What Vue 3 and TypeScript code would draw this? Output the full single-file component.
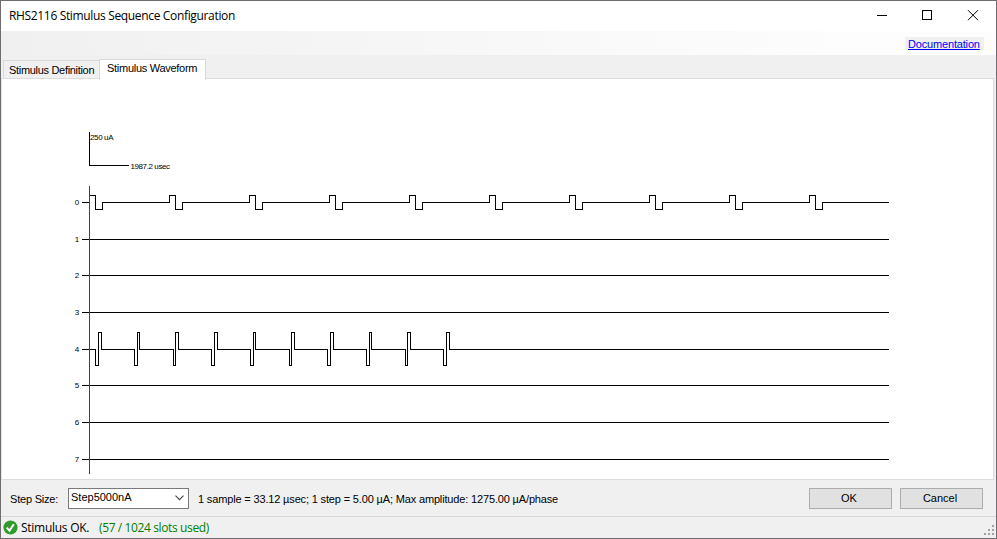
<script setup lang="ts">
import { ref } from 'vue'

interface Channel {
  id: number
  y: number
  path: string
}

const ORIGIN = 89.5
const END = 889

const baselines = [202, 239, 275, 312, 349, 385, 422, 459]

/** Left, middle and right edges of each cathodic-first pulse on channel 4. */
const shortPulses: [number, number, number][] = [
  [95, 98, 101], [134, 137, 139], [173, 175, 178], [211, 214, 217], [250, 253, 255],
  [289, 291, 294], [327, 330, 333], [366, 369, 371], [405, 407, 410], [443, 446, 449],
]

function pulsePath(y: number, edges: [number, number, number][], first: number, second: number): string {
  const base = y + 0.5
  const steps = edges.map(
    ([a, b, c]) => `H${a + 0.5}V${first + 0.5}H${b + 0.5}V${second + 0.5}H${c + 0.5}V${base}`,
  )
  return `M82 ${base}${steps.join('')}H${END}`
}

const longPulses = Array.from({ length: 10 }, (_, i): [number, number, number] => {
  const x = 89 + i * 80
  return [x, x + 6, x + 13]
})

const channels: Channel[] = baselines.map((y, id) => {
  if (id === 0) return { id, y, path: pulsePath(y, longPulses, 195, 209) }
  if (id === 4) return { id, y, path: pulsePath(y, shortPulses, 365, 332) }
  return { id, y, path: pulsePath(y, [], 0, 0) }
})

const tabs = ['Stimulus Definition', 'Stimulus Waveform']
const activeTab = ref(1)
const gripDots = [[2, 0], [1, 1], [2, 1], [0, 2], [1, 2], [2, 2]].map(([x, y]) => ({ x: x * 4, y: y * 4 }))
</script>

<template>
  <div class="window">
    <header class="titlebar">
      <span class="title">RHS2116 Stimulus Sequence Configuration</span>
      <svg class="controls" width="120" height="30" viewBox="876 1 120 30">
        <path d="M877 15.5H887" />
        <rect x="922.5" y="10.5" width="9" height="9" />
        <path d="M968 10.2L978 20.2M978 10.2L968 20.2" />
      </svg>
    </header>
    <nav class="menustrip"><a class="doc">Documentation</a></nav>
    <div class="tabs">
      <div
        v-for="(tab, i) in tabs"
        :key="tab"
        class="tab"
        :class="{ active: i === activeTab }"
        @click="activeTab = i"
      >
        <span>{{ tab }}</span>
      </div>
    </div>
    <main class="page">
      <svg class="plot" width="991" height="400" viewBox="2 79 991 400">
        <path class="trace" d="M89.5 132V165.5H129" />
        <text x="90" y="140" textLength="23.5">250 uA</text>
        <text x="130.5" y="169" textLength="39.5">1987.2 usec</text>
        <g v-for="c in channels" :key="c.id">
          <text x="74.8" :y="c.y + 3">{{ c.id }}</text>
          <path class="trace" :d="c.path" />
        </g>
        <path class="axis" :d="`M${ORIGIN} 186V474`" />
      </svg>
    </main>
    <section class="options">
      <span class="step-label">Step Size:</span>
      <div class="combo">
        <span>Step5000nA</span>
        <svg width="9" height="6" viewBox="0 0 9 6"><path d="M0.5 0.7L4.5 4.7L8.5 0.7" /></svg>
      </div>
      <span class="info">1 sample = 33.12 µsec; 1 step = 5.00 µA; Max amplitude: 1275.00 µA/phase</span>
      <button type="button">OK</button>
      <button type="button">Cancel</button>
    </section>
    <footer class="status">
      <svg class="check" width="15" height="15" viewBox="0 0 15 15">
        <circle cx="7.5" cy="7.5" r="7.1" />
        <path d="M3.7 7.6L6.5 10.6L10.8 4.3" />
      </svg>
      <span class="ok">Stimulus OK.</span>
      <span class="slots">(57 / 1024 slots used)</span>
      <svg class="grip" width="10" height="10" viewBox="0 0 10 10">
        <rect v-for="(d, i) in gripDots" :key="i" :x="d.x" :y="d.y" width="2" height="2" />
      </svg>
    </footer>
  </div>
</template>

<style>
body {
  margin: 0;
  overflow: hidden;
}
</style>

<style scoped>
.window {
  box-sizing: border-box;
  width: 997px;
  height: 539px;
  display: flex;
  flex-direction: column;
  border: 1px solid #6f6d70;
  background: #f0f0f0;
  color: #000;
  font: 11px/14px "Liberation Sans", Arial, sans-serif;
  white-space: nowrap;
}
.titlebar {
  height: 30px;
  flex: none;
  display: flex;
  align-items: center;
  justify-content: space-between;
  background: #fff;
}
.title {
  padding-left: 8px;
  font: 12px/16px "Open Sans", sans-serif;
  letter-spacing: -0.34px;
}
.controls {
  fill: none;
  stroke: #000;
}
.menustrip {
  height: 24px;
  flex: none;
  display: flex;
  justify-content: flex-end;
  background: linear-gradient(90deg, #f0f0f0, #fdfdfd 85%);
}
.doc {
  box-sizing: border-box;
  width: 79px;
  height: 13px;
  margin: 6px 12px 0 0;
  padding-left: 3px;
  background: #f0f0f0;
  color: #00f;
  line-height: 14px;
  letter-spacing: -0.17px;
  text-decoration: underline;
}
.tabs {
  height: 24px;
  flex: none;
  display: flex;
  align-items: flex-end;
  padding-left: 2px;
  position: relative;
  z-index: 1;
}
.tab {
  box-sizing: border-box;
  width: 96px;
  height: 19px;
  padding: 2px 0 0 5px;
  border: 1px solid #d9d9d9;
  border-right: 0;
  border-bottom: 0;
  letter-spacing: -0.31px;
}
.tab.active {
  width: 107px;
  height: 21px;
  margin-bottom: -1px;
  padding: 1px 0 0 7px;
  border-right: 1px solid #d9d9d9;
  background: #fff;
  letter-spacing: -0.28px;
}
.page {
  height: 400px;
  flex: none;
  margin-right: 2px;
  margin-top: -1px;
  border: 1px solid #dcdcdc;
  border-left-color: #e3e3e3;
  background: #fff;
}
.plot {
  display: block;
}
.plot text {
  font: 8px "Liberation Sans", Arial, sans-serif;
}
.trace {
  fill: none;
  stroke: #000;
  shape-rendering: crispEdges;
}
.axis {
  stroke: #e00000;
  shape-rendering: crispEdges;
}
.options {
  height: 36px;
  flex: none;
  display: flex;
  align-items: center;
  padding: 0 13px 0 9px;
}
.step-label {
  width: 58px;
  padding-top: 1px;
  letter-spacing: -0.2px;
}
.combo {
  box-sizing: border-box;
  width: 121px;
  height: 21px;
  display: flex;
  align-items: center;
  justify-content: space-between;
  padding: 0 4px 0 2px;
  border: 1px solid #7a7a7a;
  background: #fff;
}
.combo span {
  padding-bottom: 2px;
}
.combo svg {
  fill: none;
  stroke: #444;
  stroke-width: 1.1;
}
.info {
  flex: 1;
  padding: 1px 0 0 9px;
  letter-spacing: -0.155px;
}
button {
  box-sizing: border-box;
  width: 83px;
  height: 21px;
  margin-left: 8px;
  padding: 0 3px 0 0;
  border: 1px solid #adadad;
  background: #e1e1e1;
  color: #000;
  font: inherit;
}
.status {
  flex: 1;
  display: flex;
  align-items: center;
  border-top: 1px solid #d7d7d7;
  font: 12px/16px "Open Sans", sans-serif;
}
.check {
  margin: 0 0 1px 2px;
}
.check circle {
  fill: #33992f;
}
.check path {
  fill: none;
  stroke: #fff;
  stroke-width: 2;
}
.ok {
  width: 78px;
  padding-left: 3px;
  letter-spacing: -0.27px;
}
.slots {
  flex: 1;
  color: #008000;
  letter-spacing: -0.38px;
}
.grip {
  margin: 5px 2px 0 0;
  fill: #a0a0a0;
  shape-rendering: crispEdges;
}
</style>
